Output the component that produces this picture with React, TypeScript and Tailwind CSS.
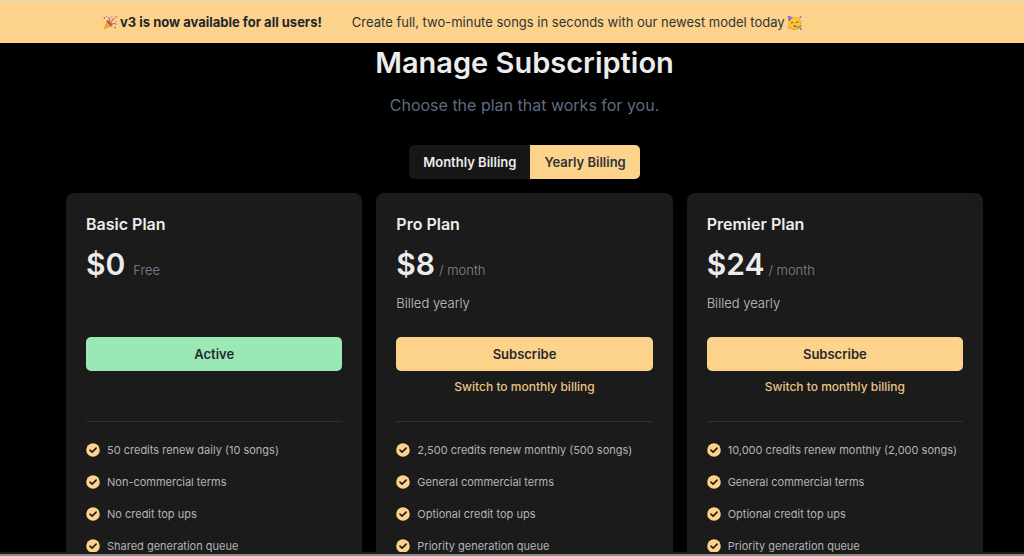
import clsx from "clsx"

const PLANS = [
    {
        name: "Basic Plan",
        price: "$0",
        unit: "Free",
        note: "",
        active: true,
        features: ["50 credits renew daily (10 songs)", "Non-commercial terms", "No credit top ups", "Shared generation queue"],
    },
    {
        name: "Pro Plan",
        price: "$8",
        unit: "/ month",
        note: "Billed yearly",
        active: false,
        features: ["2,500 credits renew monthly (500 songs)", "General commercial terms", "Optional credit top ups", "Priority generation queue"],
    },
    {
        name: "Premier Plan",
        price: "$24",
        unit: "/ month",
        note: "Billed yearly",
        active: false,
        features: ["10,000 credits renew monthly (2,000 songs)", "General commercial terms", "Optional credit top ups", "Priority generation queue"],
    },
]

const CheckIcon = () => {
    return <svg viewBox="0 0 14 14" className="h-3.5 w-3.5 shrink-0" aria-hidden="true">
        <circle cx="7" cy="7" r="6.8" fill="#fdd28b" />
        <path d="M4 7.1 6.1 9.1 10.1 5.1" fill="none" stroke="#1b1b1b" strokeWidth="1.6" strokeLinecap="round" strokeLinejoin="round" />
    </svg>
}

const PopperIcon = () => {
    return <svg viewBox="0 0 16 16" className="h-4 w-4 shrink-0" aria-hidden="true">
        <path d="M1.2 14.6 4.8 5.6 Q9 6.8 10.4 11.2Z" fill="#f3b53c" />
        <path d="M3.4 9.2 6.6 12.7M2.3 12 4.2 13.6M4.6 6.4 8.8 11.8" stroke="#c9842c" strokeWidth="0.8" />
        <ellipse cx="7.6" cy="8.3" rx="1.4" ry="3.8" transform="rotate(-44 7.6 8.3)" fill="#a8643a" />
        <path d="M7 7.4Q8.6 4.6 6.6 2M8.6 8.4Q9.6 5 12.4 3.2" fill="none" stroke="#c65a91" strokeWidth="1.1" />
        <path d="M9 9.4Q11.4 7.6 14.8 9.2" fill="none" stroke="#8878bf" strokeWidth="1.1" />
        <circle cx="2.4" cy="3" r="0.9" fill="#d9628c" />
        <circle cx="9.8" cy="2" r="0.8" fill="#7c9fd0" />
        <circle cx="14" cy="1.8" r="0.9" fill="#d9628c" />
        <circle cx="13.6" cy="6.2" r="0.8" fill="#e08a3c" />
        <circle cx="13" cy="12.6" r="0.9" fill="#c65a91" />
        <circle cx="4.2" cy="1.4" r="0.6" fill="#8878bf" />
    </svg>
}

const PartyFaceIcon = () => {
    return <svg viewBox="0 0 16 16" className="h-4 w-4 shrink-0" aria-hidden="true">
        <circle cx="7.8" cy="8.6" r="6.6" fill="#f5ac22" />
        <circle cx="7.6" cy="8" r="5.4" fill="#fdc935" />
        <path d="M.6 .6 5.8 2.4 1.8 6.4Z" fill="#7a5fc0" />
        <path d="M1 2.8 3.6 1.9M1.5 4.6 4.8 2.9" stroke="#d08ad0" strokeWidth="0.7" />
        <path d="M4.2 8Q5.2 6.6 6.4 7.8M8.8 7.4Q10 6 11.2 7.2" fill="none" stroke="#7b4718" strokeWidth="0.9" strokeLinecap="round" />
        <path d="M8.4 11.2 12.4 12.4 14.2 11.2" fill="none" stroke="#5f86c4" strokeWidth="1.1" strokeLinecap="round" strokeLinejoin="round" />
        <circle cx="7.6" cy="11.2" r="1.1" fill="#b8561f" />
        <circle cx="13.4" cy="2.2" r="0.9" fill="#8064c6" />
        <circle cx="1.4" cy="12.8" r="0.8" fill="#dc6b55" />
        <circle cx="13.8" cy="14" r="0.9" fill="#8064c6" />
    </svg>
}

const PlanCard = ({ name, price, unit, note, active, features }: any) => {
    return <section className="rounded-lg bg-[#1b1b1b] px-5 pt-[19px] pb-8">
        <h2 className="text-base leading-6 font-semibold text-[#ececec]">{name}</h2>
        <p className={clsx("mt-2 flex items-baseline", active ? "gap-2" : "gap-1")}>
            <span className="text-3xl leading-10 font-semibold text-[#ececec]">{price}</span>
            <span className="text-[13px] font-light text-[#7f8999]">{unit}</span>
        </p>
        <p className="mt-[9px] h-5 text-[13px] leading-5 font-light text-[#c4c4c4]">{note}</p>
        <button className={clsx("mt-6 h-[34px] w-full rounded-[5px] pt-0.5 text-[13px] font-semibold text-[#262a30]", active ? "bg-[#9ae8b4]" : "bg-[#fdd28b]")}>
            {active ? "Active" : "Subscribe"}
        </button>
        <div className="mt-1.5 flex h-5 justify-center">
            {!active && <button className="text-xs font-medium text-[#e9c384]">Switch to monthly billing</button>}
        </div>
        <hr className="mt-6 border-[#303030]" />
        <ul className="mt-[18px] flex flex-col gap-3">
            {features.map((feature: string) => (
                <li key={feature} className="flex items-center gap-[7px] text-[11px] leading-5 whitespace-nowrap text-[#b4b4b4]">
                    <CheckIcon />
                    {feature}
                </li>
            ))}
        </ul>
    </section>
}

const App = () => {
    return <div className="flex h-screen flex-col bg-black font-['Inter',sans-serif]">
        <div className="flex h-[43px] shrink-0 items-center gap-[30px] border-t border-[#dedbd3] bg-[#fdd28b] pt-0.5 pl-[102px] text-[13px] whitespace-nowrap text-[#30343a]">
            <p className="flex items-center gap-0.5 font-bold text-[#22262c]">
                <PopperIcon />
                v3 is now available for all users!
            </p>
            <p className="flex items-center gap-0.5">
                Create full, two-minute songs in seconds with our newest model today
                <PartyFaceIcon />
            </p>
        </div>
        <main className="min-h-0 flex-1 overflow-hidden pr-[41px] pl-[66px]">
            <h1 className="text-center text-[29px] leading-10 font-semibold text-[#ececec]">Manage Subscription</h1>
            <p className="mt-2 text-center text-base leading-7 text-[#5f6b80]">Choose the plan that works for you.</p>
            <div className="mt-[26px] flex justify-center text-[13px] font-semibold">
                <button className="h-[34px] rounded-l-[5px] bg-[#161616] px-3.5 pt-0.5 text-[#ececec]">Monthly Billing</button>
                <button className="h-[34px] rounded-r-[5px] bg-[#fdd28b] px-3.5 pt-0.5 text-[#30343a]">Yearly Billing</button>
            </div>
            <div className="mt-3.5 grid grid-cols-3 gap-3.5">
                {PLANS.map((plan) => (
                    <PlanCard key={plan.name} {...plan} />
                ))}
            </div>
        </main>
        <footer className="h-1 shrink-0 border-b-2 border-[#8d8989] bg-[#1b1b1b]" />
    </div>
}

export default App
